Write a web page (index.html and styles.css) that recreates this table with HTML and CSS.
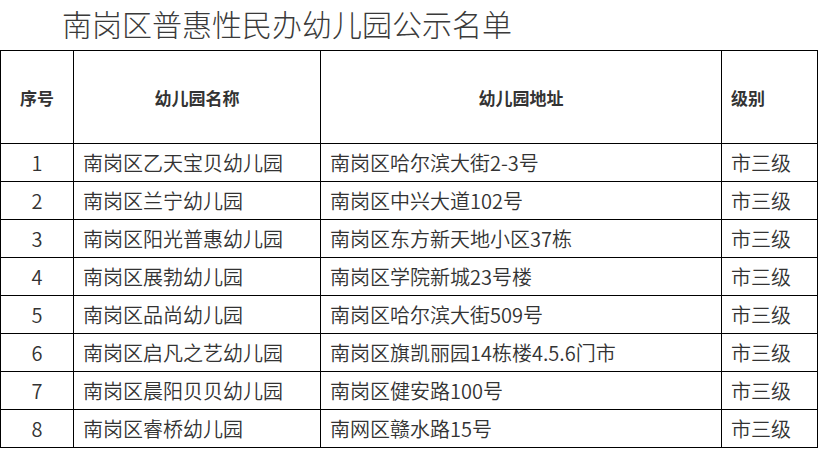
FILE: index.html
```html
<!DOCTYPE html>
<html lang="zh-CN">
<head>
<meta charset="utf-8">
<title>南岗区普惠性民办幼儿园公示名单</title>
<link rel="stylesheet" href="styles.css">
</head>
<body>
<h1 class="title">南岗区普惠性民办幼儿园公示名单</h1>
<table class="list">
  <colgroup>
    <col class="c-no">
    <col class="c-name">
    <col class="c-addr">
    <col class="c-level">
  </colgroup>
  <thead>
    <tr>
      <th class="center">序号</th>
      <th class="center">幼儿园名称</th>
      <th class="center">幼儿园地址</th>
      <th class="left">级别</th>
    </tr>
  </thead>
  <tbody>
    <tr><td class="center">1</td><td>南岗区乙天宝贝幼儿园</td><td>南岗区哈尔滨大街2-3号</td><td>市三级</td></tr>
    <tr><td class="center">2</td><td>南岗区兰宁幼儿园</td><td>南岗区中兴大道102号</td><td>市三级</td></tr>
    <tr><td class="center">3</td><td>南岗区阳光普惠幼儿园</td><td>南岗区东方新天地小区37栋</td><td>市三级</td></tr>
    <tr><td class="center">4</td><td>南岗区展勃幼儿园</td><td>南岗区学院新城23号楼</td><td>市三级</td></tr>
    <tr><td class="center">5</td><td>南岗区品尚幼儿园</td><td>南岗区哈尔滨大街509号</td><td>市三级</td></tr>
    <tr><td class="center">6</td><td>南岗区启凡之艺幼儿园</td><td>南岗区旗凯丽园14栋楼4.5.6门市</td><td>市三级</td></tr>
    <tr><td class="center">7</td><td>南岗区晨阳贝贝幼儿园</td><td>南岗区健安路100号</td><td>市三级</td></tr>
    <tr><td class="center">8</td><td>南岗区睿桥幼儿园</td><td>南网区赣水路15号</td><td>市三级</td></tr>
  </tbody>
</table>
</body>
</html>
```
FILE: styles.css
```css
html, body {
  margin: 0;
  padding: 0;
  background: #ffffff;
}
body {
  font-family: "Noto Sans CJK SC", "Noto Sans", sans-serif;
  color: #333333;
}
.title {
  margin: 0;
  padding: 0 0 0 62px;
  height: 50px;
  line-height: 46px;
  font-size: 30px;
  font-weight: 300;
  color: #3a3a3a;
}
.list {
  border-collapse: collapse;
  table-layout: fixed;
  width: 817px;
}
.c-no { width: 73px; }
.c-name { width: 247px; }
.c-addr { width: 401px; }
.c-level { width: 96px; }
.list th,
.list td {
  border: 1px solid #000000;
  padding: 0 0 0 9px;
  text-align: left;
  white-space: nowrap;
  overflow: hidden;
}
.list th {
  height: 92px;
  font-size: 17px;
  font-weight: 700;
  color: #333333;
}
.list td {
  height: 37px;
  font-size: 20px;
  font-weight: 350;
  color: #333333;
  line-height: 24px;
}
.list th.center,
.list td.center {
  text-align: center;
  padding: 0;
}
```
